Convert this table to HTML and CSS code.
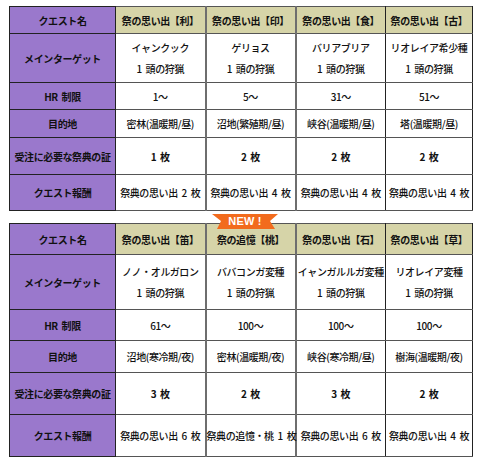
FILE: index.html
```html
<!DOCTYPE html>
<html lang="ja">
<head>
<meta charset="utf-8">
<link rel="stylesheet" href="styles.css">
</head>
<body>
<div class="page">
  <table class="quest t1">
    <colgroup><col class="c-lab"><col class="c-d"><col class="c-d"><col class="c-d"><col class="c-d4"></colgroup>
    <tr class="r-head">
      <th class="lab">クエスト名</th>
      <th class="head">祭の思い出【利】</th>
      <th class="head g">祭の思い出【印】</th>
      <th class="head g">祭の思い出【食】</th>
      <th class="head">祭の思い出【古】</th>
    </tr>
    <tr class="r-target">
      <th class="lab">メインターゲット</th>
      <td>イャンクック<br>1 頭の狩猟</td>
      <td class="g">ゲリョス<br>1 頭の狩猟</td>
      <td class="g">バリアブリア<br>1 頭の狩猟</td>
      <td>リオレイア希少種<br>1 頭の狩猟</td>
    </tr>
    <tr class="r-hr">
      <th class="lab">HR 制限</th>
      <td>1～</td>
      <td class="g">5～</td>
      <td class="g">31～</td>
      <td>51～</td>
    </tr>
    <tr class="r-dest">
      <th class="lab">目的地</th>
      <td>密林(温暖期/昼)</td>
      <td class="g">沼地(繁殖期/昼)</td>
      <td class="g">峡谷(温暖期/昼)</td>
      <td>塔(温暖期/昼)</td>
    </tr>
    <tr class="r-cert">
      <th class="lab">受注に必要な祭典の証</th>
      <td class="b">1 枚</td>
      <td class="b g">2 枚</td>
      <td class="b g">2 枚</td>
      <td class="b">2 枚</td>
    </tr>
    <tr class="r-rew">
      <th class="lab">クエスト報酬</th>
      <td>祭典の思い出 2 枚</td>
      <td class="g">祭典の思い出 4 枚</td>
      <td class="g">祭典の思い出 4 枚</td>
      <td>祭典の思い出 4 枚</td>
    </tr>
  </table>

  <div class="t2wrap">
    <svg class="newbadge" width="66" height="15" viewBox="0 0 66 15" aria-hidden="true">
      <polygon points="0,0 66,0 58,7 63,15 5,15 9,7" fill="#f26b1d"/>
    </svg>
    <span class="newtext">NEW !</span>
    <table class="quest t2">
      <colgroup><col class="c-lab"><col class="c-d"><col class="c-d"><col class="c-d"><col class="c-d4"></colgroup>
      <tr class="r-head">
        <th class="lab">クエスト名</th>
        <th class="head">祭の思い出【笛】</th>
        <th class="head g">祭の追憶【桃】</th>
        <th class="head g">祭の思い出【石】</th>
        <th class="head">祭の思い出【草】</th>
      </tr>
      <tr class="r-target">
        <th class="lab">メインターゲット</th>
        <td>ノノ・オルガロン<br>1 頭の狩猟</td>
        <td class="g">ババコンガ変種<br>1 頭の狩猟</td>
        <td class="g">イャンガルルガ変種<br>1 頭の狩猟</td>
        <td>リオレイア変種<br>1 頭の狩猟</td>
      </tr>
      <tr class="r-hr">
        <th class="lab">HR 制限</th>
        <td>61～</td>
        <td class="g">100～</td>
        <td class="g">100～</td>
        <td>100～</td>
      </tr>
      <tr class="r-dest">
        <th class="lab">目的地</th>
        <td>沼地(寒冷期/夜)</td>
        <td class="g">密林(温暖期/夜)</td>
        <td class="g">峡谷(寒冷期/昼)</td>
        <td>樹海(温暖期/夜)</td>
      </tr>
      <tr class="r-cert">
        <th class="lab">受注に必要な祭典の証</th>
        <td class="b">3 枚</td>
        <td class="b g">2 枚</td>
        <td class="b g">3 枚</td>
        <td class="b">2 枚</td>
      </tr>
      <tr class="r-rew">
        <th class="lab">クエスト報酬</th>
        <td>祭典の思い出 6 枚</td>
        <td class="g">祭典の追憶・桃 1 枚</td>
        <td class="g">祭典の思い出 6 枚</td>
        <td>祭典の思い出 4 枚</td>
      </tr>
    </table>
  </div>
</div>
</body>
</html>
```

FILE: styles.css
```css
html, body {
  margin: 0;
  padding: 0;
  background: #ffffff;
}
.page {
  padding: 6px 0 0 9px;
  width: 463px;
  display: flex;
  flex-direction: column;
  gap: 12px;
  font-family: "Noto Sans CJK JP", "Noto Sans", sans-serif;
  color: #111;
}
.quest {
  border-collapse: collapse;
  table-layout: fixed;
  width: 463px;
  border: 1px solid #111;
}
.c-lab { width: 106px; }
.c-d { width: 90px; }
.c-d4 { width: 87px; }
.quest th, .quest td {
  padding: 0;
  text-align: center;
  vertical-align: middle;
  font-size: 10px;
  letter-spacing: -0.4px;
  word-spacing: 2px;
  border-top: 1px solid #555;
  border-bottom: 1px solid #555;
  border-left: 1px solid #222;
  border-right: 1px solid #222;
  white-space: nowrap;
}
.quest td { font-weight: 500; line-height: 21px; }
.quest td.b { font-weight: 700; }
.quest .g { border-left: 2px solid #6e6e6e; }
.quest .lab {
  background: #9a78cc;
  font-weight: 700;
  border-top: 1px solid #222;
  border-bottom: 1px solid #222;
  color: #111;
}
.quest .head {
  background: #d6d4a8;
  font-weight: 700;
}
.t1 .r-head { height: 27px; }
.t1 .r-target { height: 49px; }
.t1 .r-hr { height: 27px; }
.t1 .r-dest { height: 28px; }
.t1 .r-cert { height: 37px; }
.t1 .r-rew { height: 36px; }
.t2 .r-head { height: 31px; }
.t2 .r-target { height: 55px; }
.t2 .r-hr { height: 31px; }
.t2 .r-dest { height: 32px; }
.t2 .r-cert { height: 42px; }
.t2 .r-rew { height: 42px; }
.t2wrap {
  position: relative;
}
.newbadge {
  position: absolute;
  left: 203px;
  top: -9px;
  z-index: 2;
}
.newtext {
  position: absolute;
  left: 203px;
  top: -9px;
  width: 66px;
  height: 15px;
  line-height: 15px;
  text-align: center;
  z-index: 3;
  color: #fff;
  font-family: "Liberation Sans", Arial, sans-serif;
  font-weight: 700;
  font-size: 11px;
  letter-spacing: 0.2px;
}
```
